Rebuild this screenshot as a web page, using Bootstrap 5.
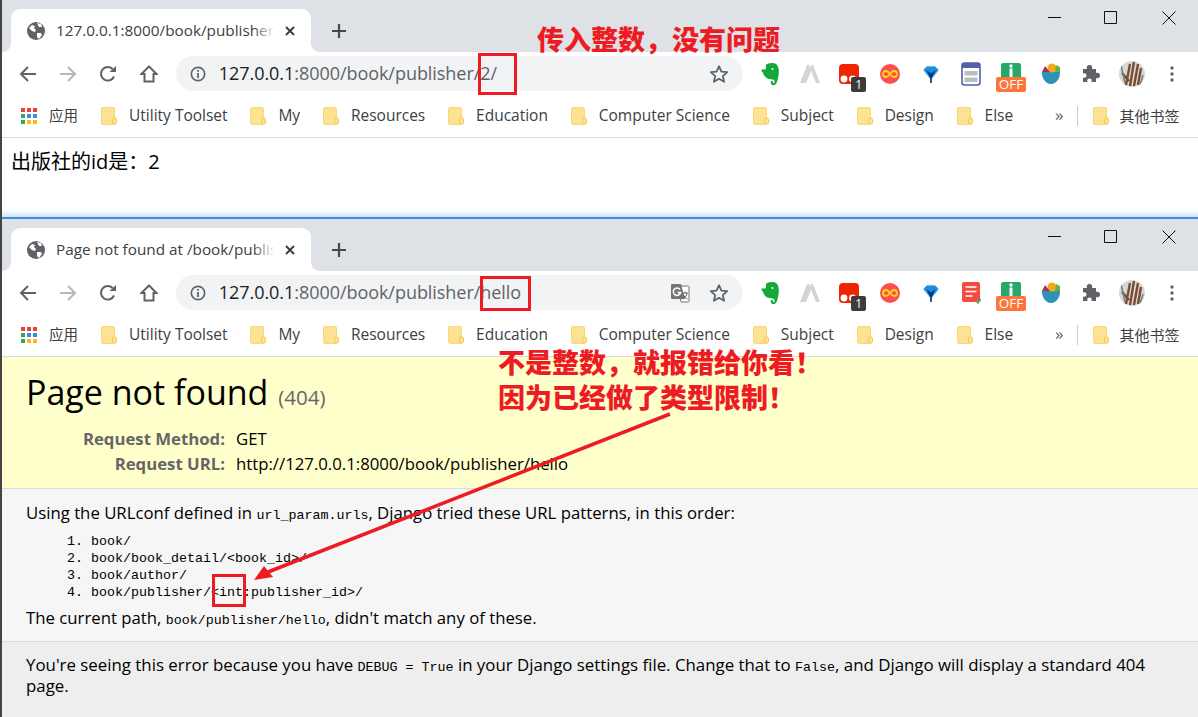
<!DOCTYPE html>
<html lang="zh-CN">
<head>
    <meta charset="UTF-8">
    <link href="https://cdn.jsdelivr.net/npm/bootstrap@5.3.0/dist/css/bootstrap.min.css" rel="stylesheet">
    <script src="https://cdn.jsdelivr.net/npm/bootstrap@5.3.0/dist/js/bootstrap.bundle.min.js"></script>
    <title>Page not found</title>
    <style>
        html, body { margin: 0; height: 717px; overflow: hidden; background: #fff; }
        body { position: relative; width: 1198px; border-left: 2px solid #444; font-family: "Open Sans", "Noto Sans CJK SC", sans-serif; color: #000; }
        .wnd { margin-left: -1px; }
        .tabstrip { height: 52px; background: #dee1e6; position: relative; }
        .chrome-tab { position: absolute; left: 10px; top: 9px; width: 300px; height: 43px; background: #fff; border-radius: 9px 9px 0 0; padding-left: 16px; }
        .chrome-tab::before, .chrome-tab::after { content: ""; position: absolute; bottom: 0; width: 8px; height: 8px; }
        .chrome-tab::before { left: -8px; background: radial-gradient(circle at 0 0, #dee1e6 7.5px, #fff 8px); }
        .chrome-tab::after { right: -8px; background: radial-gradient(circle at 100% 0, #dee1e6 7.5px, #fff 8px); }
        .tab-title { width: 219px; margin-left: 11px; font-size: 15.3px; color: #3c4043; white-space: nowrap; overflow: hidden; position: relative; }
        .tab-title::after { content: ""; position: absolute; right: 0; top: 0; bottom: 0; width: 22px; background: linear-gradient(to right, rgba(255,255,255,0), #fff); }
        .tab-x { margin-left: 9px; }
        .tab-plus { position: absolute; left: 329px; top: 22px; }
        .wnd-ctl { position: absolute; top: 11px; }
        .ctl-min { left: 1047px; }
        .ctl-max { left: 1103px; }
        .ctl-close { left: 1161px; }
        .tool-row { height: 43px; padding-left: 7px; }
        .slot { width: 40.2px; flex: none; }
        .omni { width: 567px; height: 35px; margin-left: 7px; margin-right: 7px; flex: none; border-radius: 18px; background: #f1f3f4; padding-left: 14px; padding-right: 14px; }
        .omni-url { margin-left: 13px; font-size: 18px; letter-spacing: -.05px; color: #5f6368; white-space: nowrap; }
        .omni-url b { font-weight: 400; color: #202124; }
        .omni-star { margin-left: auto; }
        .omni-tr { margin-left: auto; margin-right: 19px; }
        .omni-tr + .omni-star { margin-left: 0; }
        .ext-badge { position: absolute; left: 12px; top: 13px; width: 15px; height: 15px; border-radius: 2px; background: #3c3c3c; color: #fff; font-size: 12px; line-height: 15px; text-align: center; }
        .off-tag { position: absolute; left: 1px; top: 19px; width: 30px; height: 15px; border-radius: 2px; background: #ff7539; color: #fff; font-size: 13.5px; line-height: 15px; text-align: center; }
        .mark-row { height: 43px; padding-left: 20px; border-bottom: 1px solid #d9dadc; font-size: 15.5px; color: #3c4043; white-space: nowrap; }
        .mark-row > * { flex: none; }
        .apps { margin-right: 11px; }
        .mark-cn { margin-right: 23px; font-size: 14.5px; }
        .mark-item { margin-right: 22.8px; gap: 12px; }
        .mark-other { font-size: 15px; gap: 10px; }
        .sep-v { width: 1px; height: 20px; background: #c9cacc; margin: 0 15px 0 14px; }
        .chev { font-size: 17px; line-height: 17px; color: #5f6368; margin-left: 19px; margin-top: -3px; }
        .top-page { height: 72px; padding: 9px 10px; font-size: 20px; }
        .edge-blue { height: 9px; background: linear-gradient(to bottom, #fff, #d2e5f7); border-bottom: 2px solid #3c8fdd; }
        .dj-summary { height: 132px; background: #ffc; border-bottom: 1px solid #ddd; padding: 13px 25px 0; }
        .dj-summary h1 { font-size: 34px; font-weight: 400; line-height: 44px; margin: 0 0 7px; }
        .dj-summary h1 span { font-size: 20.5px; color: #666; margin-left: 1px; }
        .dj-meta { font-size: 16.75px; line-height: 25px; }
        .dj-meta dt { width: 199px; text-align: right; color: #666; font-weight: 700; flex: none; margin: 0; }
        .dj-meta dd { margin: 0 0 0 11px; }
        .dj-info { height: 153px; background: #f6f6f6; border-bottom: 1px solid #ddd; padding: 12px 25px 0; font-size: 16.75px; line-height: 24px; }
        .dj-info p { margin: 0; }
        .dj-mono { font-family: "Liberation Mono", monospace; font-size: 13.33px; line-height: 1; }
        .dj-info ol { margin: 8px 0 5px; padding-left: 65px; font-family: "Liberation Mono", monospace; font-size: 13.33px; line-height: 17px; }
        .dj-foot { height: 76px; background: #eee; padding: 12px 25px 0; font-size: 16.85px; line-height: 21px; }
        .note { position: absolute; font-family: "Noto Sans CJK SC", sans-serif; font-weight: 900; font-size: 27px; line-height: 35px; color: #ed1c24; white-space: nowrap; }
        .note-a { left: 535px; top: 21px; }
        .note-b { left: 496px; top: 344px; }
        .marks-layer { position: absolute; left: -2px; top: 0; }
    </style>
</head>
<body>
    <svg width="0" height="0" class="d-block position-absolute">
        <defs>
            <symbol id="i-globe" viewBox="0 0 18 18"><circle cx="9" cy="9" r="9" fill="#5f6368"/><path d="M2 6l3-3 3 1-1 2 2 2-1 2-3-1zM10 1l4 1 1 3-3 0zM10 11h4l1 2-3 4-2-2z" fill="#fff"/></symbol>
            <symbol id="i-close" viewBox="0 0 12 12"><path d="M2 2l8 8M10 2l-8 8" stroke="#3c4043" stroke-width="2"/></symbol>
            <symbol id="i-plus" viewBox="0 0 18 18"><path d="M9 2v14M2 9h14" stroke="#44474b" stroke-width="2.2"/></symbol>
            <symbol id="i-back" viewBox="0 0 18 18"><path d="M17 9H2M9 2L2 9l7 7" fill="none" stroke="#5f6368" stroke-width="2"/></symbol>
            <symbol id="i-fwd" viewBox="0 0 18 18"><path d="M1 9h15M9 2l7 7-7 7" fill="none" stroke="#b4b7bb" stroke-width="2"/></symbol>
            <symbol id="i-reload" viewBox="0 0 18 18"><path d="M15 11.500A6.800 6.800 0 1 1 13.600 4" fill="none" stroke="#5f6368" stroke-width="2"/><path d="M10.500 7H17V1z" fill="#5f6368"/></symbol>
            <symbol id="i-home" viewBox="0 0 18 18"><path d="M9 1.500L1.500 9H4.500v7.500h9V9h3z" fill="none" stroke="#5f6368" stroke-width="2" stroke-linejoin="miter"/></symbol>
            <symbol id="i-info" viewBox="0 0 16 16"><circle cx="8" cy="8" r="6.700" fill="none" stroke="#5f6368" stroke-width="1.700"/><path d="M8 7v5M8 4v1.800" stroke="#5f6368" stroke-width="1.800"/></symbol>
            <symbol id="i-star" viewBox="0 0 20 20"><path d="M10 2.200l2.400 5.400 5.800.6-4.400 3.900 1.300 5.700L10 14.800l-5.100 3 1.300-5.700L1.800 8.200l5.800-.6z" fill="none" stroke="#5f6368" stroke-width="1.800" stroke-linejoin="round"/></symbol>
            <symbol id="i-trans" viewBox="0 0 20 20"><path d="M8 3h10a1 1 0 0 1 1 1v14a1 1 0 0 1-1 1h-7z" fill="#fff" stroke="#777" stroke-width="1"/><path d="M2 1h9l4 15H2a1 1 0 0 1-1-1V2a1 1 0 0 1 1-1z" fill="#757575"/><path d="M10 6.500a3.700 3.700 0 1 0 .6 3H7.500" fill="none" stroke="#fff" stroke-width="1.500"/><path d="M12 10h6M15 8.500v1.500M17 10c-.5 3-2 5-4 6M13.500 11.500c.5 2 2 3.500 4 4.500" fill="none" stroke="#666" stroke-width="1"/></symbol>
            <symbol id="i-note" viewBox="0 0 20 24"><path d="M6 3c1-2 9-3 11 0 2.500 3 2 9 1 13-.6 2.500-1 6-3.500 7-2 .6-4-.8-3.800-2.800.1-1.500 2.300-1.800 2.800-.5-.8.1-1 1.300 0 1.500 1.500.2 1.500-3 0-3.500-3-.5-7-.5-9-3.700C3 12 3.500 10 1.500 9.500V7.500H5c1 0 1-1 1-4.500z" fill="#14a83b"/><circle cx="12.500" cy="7" r="1" fill="#fff"/></symbol>
            <symbol id="i-arc" viewBox="0 0 22 20"><path d="M1 19L8 1h2l2 6-5 12zM21 19L14 1h-2l-1 3 6 15z" fill="#d4d4d4"/></symbol>
            <symbol id="i-rec" viewBox="0 0 20 20"><rect width="20" height="20" rx="4" fill="#ed2500"/><circle cx="5" cy="15" r="3.400" fill="#fff"/><circle cx="13.500" cy="15" r="3.400" fill="#fff"/></symbol>
            <symbol id="i-inf" viewBox="0 0 20 20"><circle cx="10" cy="10" r="10" fill="#fb4f4f"/><path d="M10 10c-1.500-2.200-2.800-3-4-3a3 3 0 0 0 0 6c1.200 0 2.500-.8 4-3s2.800-3 4-3a3 3 0 0 1 0 6c-1.200 0-2.500-.8-4-3z" fill="none" stroke="#ffd51a" stroke-width="1.800"/></symbol>
            <symbol id="i-gem" viewBox="0 0 18 20"><path d="M1 6l4-4h8l4 4-8 10z" fill="#1a8fe8" stroke="#dde3ea" stroke-width="1"/><path d="M4.500 6l4.500 3.500L13.500 6l-4.500 10z" fill="#063a78"/><path d="M8.200 15h1.600v4H8.200z" fill="#0b3566"/></symbol>
            <symbol id="i-pane" viewBox="0 0 20 24"><rect x="1" y="1" width="18" height="22" rx="2.500" fill="#fff" stroke="#5261a8" stroke-width="1.600"/><rect x="1" y="1" width="18" height="5" fill="#5261a8"/><rect x="3.500" y="9" width="13" height="4.500" fill="#bdbdbd"/><rect x="3.500" y="15.500" width="13" height="4.500" fill="#bdbdbd"/></symbol>
            <symbol id="i-memo" viewBox="0 0 20 24"><rect x="1" y="1" width="18" height="20" rx="2" fill="#f54b41"/><path d="M4.500 6h11M4.500 10.500h11M4.500 15h7" stroke="#fff" stroke-width="1.700"/><path d="M15 20l2 2 3-4" fill="none" stroke="#46b46c" stroke-width="1.600"/></symbol>
            <symbol id="i-offbase" viewBox="0 0 20 14"><path d="M2 0h16a2 2 0 0 1 2 2v12H0V2a2 2 0 0 1 2-2z" fill="#25a96a"/><circle cx="10" cy="3" r="1.700" fill="#fff"/><path d="M8.500 5.500h3V14h-3z" fill="#fff"/></symbol>
            <symbol id="i-bowl" viewBox="0 0 20 22"><path d="M1 9h18c.3 6-3.500 12-9 12S.700 15 1 9z" fill="#2e93b5"/><circle cx="11" cy="5" r="4.500" fill="#f5a81c"/><path d="M1 9l3-6 5 6z" fill="#a9324f"/><path d="M15 2l4 2 0 5h-5z" fill="#6ab04a"/></symbol>
            <symbol id="i-puzzle" viewBox="0 0 20 20"><path d="M2 5h4c-1-3 1-4 2.500-4S12 2 11 5h4v4c3-1 4 1 4 2.500s-1 3.500-4 2.500v4h-4.500c.8-2.500-.5-3.500-2-3.500s-2.800 1-2 3.500H2v-4.500c2.500.8 3.500-.5 3.500-2S4.500 8.700 2 9.500z" fill="#5f6368"/></symbol>
            <symbol id="i-me" viewBox="0 0 26 26"><clipPath id="me-clip"><circle cx="13" cy="13" r="13"/></clipPath><g clip-path="url(#me-clip)"><rect width="26" height="26" fill="#d8d8d2"/><path d="M7 24L11 3M11 25L15 1M15 25L19 3M19 24L22 7M3 12l7 8" stroke="#7b4a35" stroke-width="2.400"/><path d="M2 4l4 18M24 14l-3 10" stroke="#71807a" stroke-width="1.500"/></g></symbol>
            <symbol id="i-dots" viewBox="0 0 4 16"><circle cx="2" cy="2" r="1.700" fill="#5f6368"/><circle cx="2" cy="8" r="1.700" fill="#5f6368"/><circle cx="2" cy="14" r="1.700" fill="#5f6368"/></symbol>
            <symbol id="i-folder" viewBox="0 0 16 18"><rect x=".5" y=".5" width="13" height="17" rx="1.500" fill="#fde293" stroke="#f9d970"/><rect x="11.500" y="11" width="4" height="6" rx="1.500" fill="#fde293" stroke="#f1c84f"/></symbol>
            <symbol id="i-apps" viewBox="0 0 17 17"><path d="M0 0h4v4H0z" fill="#ea4335"/><path d="M6 0h4v4H6z" fill="#ea4335"/><path d="M12 0h4v4h-4z" fill="#ea4335"/><path d="M0 6h4v4H0z" fill="#34a853"/><path d="M6 6h4v4H6z" fill="#4285f4"/><path d="M12 6h4v4h-4z" fill="#4285f4"/><path d="M0 12h4v4H0z" fill="#34a853"/><path d="M6 12h4v4H6z" fill="#fbbc04"/><path d="M12 12h4v4h-4z" fill="#fbbc04"/></symbol>
        </defs>
    </svg>

    <!-- 上の窓 -->
    <div class="wnd">
        <div class="tabstrip">
            <div class="chrome-tab d-flex align-items-center">
                <svg width="18" height="18"><use href="#i-globe"/></svg>
                <div class="tab-title">127.0.0.1:8000/book/publisher/2/</div>
                <svg class="tab-x" width="12" height="12"><use href="#i-close"/></svg>
            </div>
            <svg class="tab-plus" width="18" height="18"><use href="#i-plus"/></svg>
            <svg class="wnd-ctl ctl-min" width="14" height="14"><path d="M0 6.500h13" stroke="#111"/></svg>
            <svg class="wnd-ctl ctl-max" width="14" height="14"><path d="M.5.500h12v12H.5z" fill="none" stroke="#111"/></svg>
            <svg class="wnd-ctl ctl-close" width="14" height="14"><path d="M.5.500l13 13M13.500.500l-13 13" stroke="#111"/></svg>
        </div>
        <div class="tool-row d-flex align-items-center">
            <div class="slot d-flex justify-content-center"><svg width="18" height="18"><use href="#i-back"/></svg></div>
            <div class="slot d-flex justify-content-center"><svg width="18" height="18"><use href="#i-fwd"/></svg></div>
            <div class="slot d-flex justify-content-center"><svg width="18" height="18"><use href="#i-reload"/></svg></div>
            <div class="slot d-flex justify-content-center"><svg width="18" height="18"><use href="#i-home"/></svg></div>
            <div class="omni d-flex align-items-center">
                <svg width="16" height="16"><use href="#i-info"/></svg>
                <div class="omni-url"><b>127.0.0.1</b>:8000/book/publisher/2/</div>
                <svg class="omni-star" width="20" height="20"><use href="#i-star"/></svg>
            </div>
            <div class="slot d-flex justify-content-center"><svg width="20" height="24"><use href="#i-note"/></svg></div>
            <div class="slot d-flex justify-content-center"><svg width="22" height="20"><use href="#i-arc"/></svg></div>
            <div class="slot d-flex justify-content-center"><div class="position-relative" style="width:20px;height:20px;left:-1px"><svg class="d-block" width="20" height="20"><use href="#i-rec"/></svg><span class="ext-badge">1</span></div></div>
            <div class="slot d-flex justify-content-center"><svg width="20" height="20"><use href="#i-inf"/></svg></div>
            <div class="slot d-flex justify-content-center"><svg width="18" height="20"><use href="#i-gem"/></svg></div>
            <div class="slot d-flex justify-content-center"><svg width="20" height="24"><use href="#i-pane"/></svg></div>
            <div class="slot d-flex justify-content-center"><div class="position-relative" style="width:32px;height:32px"><svg class="d-block position-absolute" style="left:6px;top:2px" width="20" height="20"><use href="#i-offbase"/></svg><span class="off-tag">OFF</span></div></div>
            <div class="slot d-flex justify-content-center"><svg width="20" height="22"><use href="#i-bowl"/></svg></div>
            <div class="slot d-flex justify-content-center"><svg width="20" height="20"><use href="#i-puzzle"/></svg></div>
            <div class="slot d-flex justify-content-center"><svg width="26" height="26"><use href="#i-me"/></svg></div>
            <div class="slot d-flex justify-content-center"><svg width="4" height="16"><use href="#i-dots"/></svg></div>
        </div>
        <div class="mark-row d-flex align-items-center">
            <svg class="apps" width="17" height="17"><use href="#i-apps"/></svg><span class="mark-cn">应用</span>
            <span class="mark-item d-flex align-items-center"><svg width="16" height="18"><use href="#i-folder"/></svg>Utility Toolset</span>
            <span class="mark-item d-flex align-items-center"><svg width="16" height="18"><use href="#i-folder"/></svg>My</span>
            <span class="mark-item d-flex align-items-center"><svg width="16" height="18"><use href="#i-folder"/></svg>Resources</span>
            <span class="mark-item d-flex align-items-center"><svg width="16" height="18"><use href="#i-folder"/></svg>Education</span>
            <span class="mark-item d-flex align-items-center"><svg width="16" height="18"><use href="#i-folder"/></svg>Computer Science</span>
            <span class="mark-item d-flex align-items-center"><svg width="16" height="18"><use href="#i-folder"/></svg>Subject</span>
            <span class="mark-item d-flex align-items-center"><svg width="16" height="18"><use href="#i-folder"/></svg>Design</span>
            <span class="mark-item d-flex align-items-center"><svg width="16" height="18"><use href="#i-folder"/></svg>Else</span>
            <span class="chev">»</span><span class="sep-v"></span>
            <span class="mark-item mark-other d-flex align-items-center"><svg width="16" height="18"><use href="#i-folder"/></svg>其他书签</span>
        </div>
        <div class="top-page">出版社的id是：2</div>
        <div class="edge-blue"></div>
    </div>

    <!-- 下の窓 -->
    <div class="wnd">
        <div class="tabstrip">
            <div class="chrome-tab d-flex align-items-center">
                <svg width="18" height="18"><use href="#i-globe"/></svg>
                <div class="tab-title">Page not found at /book/publisher/hello</div>
                <svg class="tab-x" width="12" height="12"><use href="#i-close"/></svg>
            </div>
            <svg class="tab-plus" width="18" height="18"><use href="#i-plus"/></svg>
            <svg class="wnd-ctl ctl-min" width="14" height="14"><path d="M0 6.500h13" stroke="#111"/></svg>
            <svg class="wnd-ctl ctl-max" width="14" height="14"><path d="M.5.500h12v12H.5z" fill="none" stroke="#111"/></svg>
            <svg class="wnd-ctl ctl-close" width="14" height="14"><path d="M.5.500l13 13M13.500.500l-13 13" stroke="#111"/></svg>
        </div>
        <div class="tool-row d-flex align-items-center">
            <div class="slot d-flex justify-content-center"><svg width="18" height="18"><use href="#i-back"/></svg></div>
            <div class="slot d-flex justify-content-center"><svg width="18" height="18"><use href="#i-fwd"/></svg></div>
            <div class="slot d-flex justify-content-center"><svg width="18" height="18"><use href="#i-reload"/></svg></div>
            <div class="slot d-flex justify-content-center"><svg width="18" height="18"><use href="#i-home"/></svg></div>
            <div class="omni d-flex align-items-center">
                <svg width="16" height="16"><use href="#i-info"/></svg>
                <div class="omni-url"><b>127.0.0.1</b>:8000/book/publisher/hello</div>
                <svg class="omni-tr" width="20" height="20"><use href="#i-trans"/></svg>
                <svg class="omni-star" width="20" height="20"><use href="#i-star"/></svg>
            </div>
            <div class="slot d-flex justify-content-center"><svg width="20" height="24"><use href="#i-note"/></svg></div>
            <div class="slot d-flex justify-content-center"><svg width="22" height="20"><use href="#i-arc"/></svg></div>
            <div class="slot d-flex justify-content-center"><div class="position-relative" style="width:20px;height:20px;left:-1px"><svg class="d-block" width="20" height="20"><use href="#i-rec"/></svg><span class="ext-badge">1</span></div></div>
            <div class="slot d-flex justify-content-center"><svg width="20" height="20"><use href="#i-inf"/></svg></div>
            <div class="slot d-flex justify-content-center"><svg width="18" height="20"><use href="#i-gem"/></svg></div>
            <div class="slot d-flex justify-content-center"><svg width="20" height="24"><use href="#i-memo"/></svg></div>
            <div class="slot d-flex justify-content-center"><div class="position-relative" style="width:32px;height:32px"><svg class="d-block position-absolute" style="left:6px;top:2px" width="20" height="20"><use href="#i-offbase"/></svg><span class="off-tag">OFF</span></div></div>
            <div class="slot d-flex justify-content-center"><svg width="20" height="22"><use href="#i-bowl"/></svg></div>
            <div class="slot d-flex justify-content-center"><svg width="20" height="20"><use href="#i-puzzle"/></svg></div>
            <div class="slot d-flex justify-content-center"><svg width="26" height="26"><use href="#i-me"/></svg></div>
            <div class="slot d-flex justify-content-center"><svg width="4" height="16"><use href="#i-dots"/></svg></div>
        </div>
        <div class="mark-row d-flex align-items-center">
            <svg class="apps" width="17" height="17"><use href="#i-apps"/></svg><span class="mark-cn">应用</span>
            <span class="mark-item d-flex align-items-center"><svg width="16" height="18"><use href="#i-folder"/></svg>Utility Toolset</span>
            <span class="mark-item d-flex align-items-center"><svg width="16" height="18"><use href="#i-folder"/></svg>My</span>
            <span class="mark-item d-flex align-items-center"><svg width="16" height="18"><use href="#i-folder"/></svg>Resources</span>
            <span class="mark-item d-flex align-items-center"><svg width="16" height="18"><use href="#i-folder"/></svg>Education</span>
            <span class="mark-item d-flex align-items-center"><svg width="16" height="18"><use href="#i-folder"/></svg>Computer Science</span>
            <span class="mark-item d-flex align-items-center"><svg width="16" height="18"><use href="#i-folder"/></svg>Subject</span>
            <span class="mark-item d-flex align-items-center"><svg width="16" height="18"><use href="#i-folder"/></svg>Design</span>
            <span class="mark-item d-flex align-items-center"><svg width="16" height="18"><use href="#i-folder"/></svg>Else</span>
            <span class="chev">»</span><span class="sep-v"></span>
            <span class="mark-item mark-other d-flex align-items-center"><svg width="16" height="18"><use href="#i-folder"/></svg>其他书签</span>
        </div>
        <div class="dj-summary">
            <h1>Page not found <span>(404)</span></h1>
            <dl class="dj-meta m-0">
                <div class="d-flex"><dt>Request Method:</dt><dd>GET</dd></div>
                <div class="d-flex"><dt>Request URL:</dt><dd>http://127.0.0.1:8000/book/publisher/hello</dd></div>
            </dl>
        </div>
        <div class="dj-info">
            <p>Using the URLconf defined in <code class="dj-mono text-black">url_param.urls</code>, Django tried these URL patterns, in this order:</p>
            <ol>
                <li>book/</li>
                <li>book/book_detail/&lt;book_id&gt;/</li>
                <li>book/author/</li>
                <li>book/publisher/&lt;int:publisher_id&gt;/</li>
            </ol>
            <p>The current path, <code class="dj-mono text-black">book/publisher/hello</code>, didn't match any of these.</p>
        </div>
        <div class="dj-foot">You're seeing this error because you have <code class="dj-mono text-black">DEBUG = True</code> in your Django settings file. Change that to <code class="dj-mono text-black">False</code>, and Django will display a standard 404 page.</div>
    </div>

    <!-- 注釈 -->
    <svg class="marks-layer" width="1198" height="717">
        <g fill="none" stroke="#ed1c24" stroke-width="3">
            <rect x="479.500" y="54.500" width="36" height="39"/>
            <rect x="481.500" y="277.500" width="48" height="32"/>
            <rect x="213.500" y="575.500" width="31" height="30"/>
        </g>
        <path d="M670 414L268 572" stroke="#ed1c24" stroke-width="3.500" fill="none"/>
        <path d="M254 580L264 566 273 577z" fill="#ed1c24"/>
    </svg>
    <div class="note note-a">传入整数，没有问题</div>
    <div class="note note-b">不是整数，就报错给你看！<br>因为已经做了类型限制！</div>
</body>
</html>
